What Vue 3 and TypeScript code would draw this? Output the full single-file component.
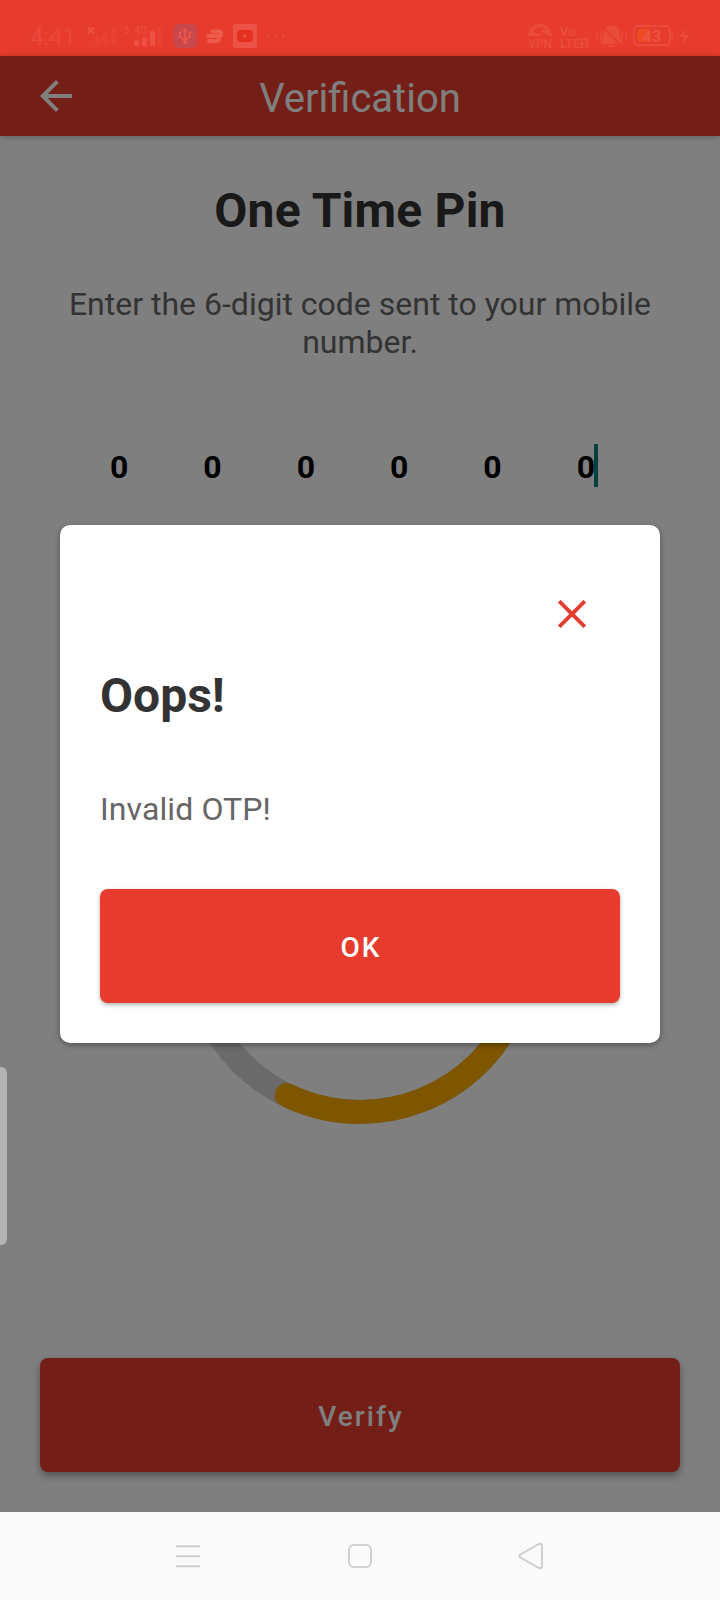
<script setup lang="ts">
import { ref } from 'vue'

const digits = ref<string[]>(['0', '0', '0', '0', '0', '0'])
const dialogOpen = ref(true)

const radius = 168
const circumference = 2 * Math.PI * radius
const progress = 205.8 / 360
const dash = `${circumference * progress} ${circumference}`

function closeDialog(): void {
  dialogOpen.value = false
}
</script>

<template>
  <div class="screen">
    <div class="status">
      <svg class="status-left" width="270" height="28" viewBox="20 22 270 28">
        <g fill="#ea493b">
          <text x="30" y="45" font-size="24.5" textLength="46">4:41</text>
          <path d="M88 27.500l6 6M94 27.500l-6 6" stroke="#eb5143" stroke-width="2.400" />
          <g opacity=".4">
            <rect x="88" y="41" width="4" height="4" rx="1" />
            <rect x="95" y="37" width="5" height="8" rx="1" />
            <rect x="103" y="32" width="5" height="13" rx="1" />
            <rect x="111" y="27" width="5" height="18" rx="1" />
          </g>
          <path d="M124 29.500l3-3.500 3 3.500zM124 31.500l3 3.500 3-3.500z" />
          <text x="134" y="34" font-size="10.500" font-weight="700">4G</text>
          <g fill="#ec5143">
            <rect x="134" y="40" width="5" height="6" rx="1.500" />
            <rect x="142" y="37" width="5" height="9" rx="1.500" />
            <rect x="150" y="31" width="5" height="15" rx="1.500" />
          </g>
          <rect x="158" y="27" width="4" height="19" rx="1" opacity=".4" />
        </g>
        <rect x="173.500" y="24" width="23.500" height="24" rx="5" fill="#c8484d" />
        <g fill="none" stroke="#ee5847" stroke-width="1.500">
          <path d="M185 30v13M180 33v4l5 3 5-3v-4" />
        </g>
        <g fill="#ee5847">
          <path d="M182.500 31.500l2.500-4 2.500 4z" />
          <circle cx="185" cy="42" r="2" />
          <circle cx="180" cy="33" r="1.400" />
          <rect x="188.700" y="31.700" width="2.600" height="2.600" />
        </g>
        <g fill="none" stroke="#ee5b4c" stroke-width="4" stroke-linecap="round" stroke-linejoin="round">
          <path d="M212.500 31.500h8M208.500 36h11q1.500-.3 1.500-3M209 41h8.500q1.500 0 1.500-3" />
        </g>
        <rect x="233" y="24" width="24" height="24" rx="2" fill="#ec5245" />
        <rect x="237" y="30" width="16" height="12" rx="3.500" fill="#e4301f" />
        <path d="M243.500 33.500v5l4-2.500z" fill="#ec5245" />
        <g fill="#ea493b">
          <circle cx="268" cy="36" r="1.400" />
          <circle cx="275.500" cy="36" r="1.400" />
          <circle cx="283" cy="36" r="1.400" />
        </g>
      </svg>
      <svg class="status-right" width="166" height="28" viewBox="526 22 166 28">
        <g fill="#ea4b3b">
          <path d="M528 36a12 12 0 0 1 24 0h-4l-7-5-1 5z" />
          <path d="M533 31q7-7 14-1l-5 0-3 4z" fill="#e73c2d" />
          <text x="528" y="48" font-size="13" font-weight="700" textLength="24" lengthAdjust="spacingAndGlyphs">VPN</text>
          <text x="560" y="35.500" font-size="13" font-weight="700" textLength="16">Vo</text>
          <text x="560" y="48" font-size="13" font-weight="700" textLength="20" lengthAdjust="spacingAndGlyphs">LTE</text>
          <rect x="580.500" y="38" width="8" height="10" rx="1.500" />
          <text x="582" y="46.500" font-size="9" font-weight="700" fill="#e73c2d">2</text>
          <path d="M611.500 25q8 1 8.500 9 0 6 3 10h-23q3-4 3-10 .5-8 8.500-9zM608 45h7q-3.500 4-7 0z" />
          <path d="M602 27l19 18" stroke="#e73c2d" stroke-width="2" />
          <path d="M597 33v6M601 31v10M622 31v10M626 33v6" stroke="#ea4b3b" stroke-width="1.500" />
          <rect x="634" y="26" width="36" height="19" rx="4" fill="none" stroke="#ea4b3b" stroke-width="2" />
          <rect x="671" y="32" width="2" height="7" rx="1" />
          <rect x="637.500" y="29" width="13" height="13" rx="2" fill="#ee4b25" />
          <text x="642" y="41.500" font-size="16" font-weight="500" textLength="19" fill="#ec5545">43</text>
          <path d="M687 28l-8 9h5l-2 7 8-9h-5z" />
        </g>
      </svg>
    </div>

    <div class="app">
      <header class="bar">
        <svg class="back" width="48" height="48" viewBox="0 0 24 24" fill="#fff">
          <path d="M20 11H7.830l5.590-5.590L12 4l-8 8 8 8 1.410-1.410L7.830 13H20v-2z" />
        </svg>
        <div class="bar-title">Verification</div>
      </header>

      <main class="body">
        <h1 class="heading">One Time Pin</h1>
        <p class="hint">Enter the 6-digit code sent to your mobile number.</p>
        <div class="code">
          <span v-for="(d, i) in digits" :key="i" class="digit" :class="{ active: i === digits.length - 1 }">{{ d }}</span>
        </div>
        <svg class="timer" width="360" height="360" viewBox="0 0 360 360" fill="none" stroke-width="24">
          <circle cx="180" cy="180" :r="radius" stroke="#d4d4d4" />
          <circle
            cx="180"
            cy="180"
            :r="radius"
            stroke="#ffad00"
            stroke-linecap="round"
            :stroke-dasharray="dash"
            transform="rotate(-90 180 180)"
          />
        </svg>
        <button class="btn verify" type="button">Verify</button>
      </main>

      <div v-if="dialogOpen" class="scrim">
        <section class="dialog" role="dialog">
          <svg class="close" width="28" height="28" viewBox="0 0 28 28" @click="closeDialog">
            <path d="M1.200 1.200l25.600 25.600M26.800 1.200l-25.600 25.600" stroke="#e73c2d" stroke-width="3.800" />
          </svg>
          <h2 class="dialog-title">Oops!</h2>
          <p class="dialog-text">Invalid OTP!</p>
          <button class="btn ok" type="button" @click="closeDialog">OK</button>
        </section>
      </div>
      <div class="edge-handle"></div>
    </div>

    <nav class="nav">
      <svg width="28" height="28" viewBox="0 0 28 28" stroke="#d0d0d0" stroke-width="2">
        <path d="M2 4.300h24M2 14.300h24M2 24.300h24" />
      </svg>
      <svg width="28" height="28" viewBox="0 0 28 28" fill="none" stroke="#d0d0d0" stroke-width="2">
        <rect x="3" y="3" width="22" height="22" rx="5" />
      </svg>
      <svg width="28" height="28" viewBox="0 0 28 28" fill="none" stroke="#d0d0d0" stroke-width="2">
        <path d="M2.200 12.600L20.500 2.200Q23.800 1 24 4V24Q23.800 27 20.500 25.800L2.200 15.400Q.5 14 2.200 12.600Z" />
      </svg>
    </nav>
  </div>
</template>

<style>
body {
  margin: 0;
}
</style>

<style scoped>
.screen {
  width: 720px;
  height: 1600px;
  display: flex;
  flex-direction: column;
  overflow: hidden;
  font-family: Roboto, 'Liberation Sans', sans-serif;
}
.status {
  height: 56px;
  box-sizing: border-box;
  padding: 22px 28px 0 20px;
  display: flex;
  justify-content: space-between;
  background: #e73c2d;
}
.app {
  position: relative;
  height: 1456px;
  display: flex;
  flex-direction: column;
  background: #fff;
}
.bar {
  height: 80px;
  display: grid;
  grid-template-columns: 1fr auto 1fr;
  align-items: center;
  background: #e73c2d;
  box-shadow: 0 1px 6px rgba(0, 0, 0, 0.25);
}
.back {
  margin-left: 32px;
}
.bar-title {
  font-size: 40px;
  line-height: 48px;
  color: #fff;
  padding-top: 6px;
}
.body {
  flex: 1;
  display: flex;
  flex-direction: column;
  align-items: center;
  padding: 47px 40px 40px;
}
.heading {
  margin: 0;
  font-size: 48px;
  line-height: 56px;
  font-weight: 700;
  letter-spacing: 0.2px;
  color: #333;
}
.hint {
  margin: 46px 0 0;
  font-size: 32px;
  line-height: 38px;
  text-align: center;
  color: #666;
}
.code {
  width: 560px;
  margin-top: 83px;
  display: grid;
  grid-template-columns: repeat(6, 1fr);
  font-size: 32px;
  line-height: 47px;
  height: 43px;
  font-weight: 700;
}
.digit {
  height: 43px;
  display: flex;
  justify-content: center;
  padding-right: 15px;
}
.digit.active::after {
  content: '';
  width: 4px;
  margin-left: -1px;
  margin-right: -3px;
  background: #008577;
}
.timer {
  margin-top: 277px;
}
.btn {
  border: 0;
  height: 114px;
  border-radius: 8px;
  padding: 2px 0 0 2px;
  background: #e73c2d;
  color: #fff;
  font-family: inherit;
  font-size: 28px;
  font-weight: 500;
  letter-spacing: 2.1px;
}
.verify {
  align-self: stretch;
  margin-top: auto;
  box-shadow: 0 4px 8px rgba(0, 0, 0, 0.35);
}
.scrim {
  position: absolute;
  inset: 0;
  display: flex;
  flex-direction: column;
  align-items: center;
  background: rgba(0, 0, 0, 0.5);
}
.dialog {
  width: 600px;
  height: 518px;
  margin-top: 469px;
  box-sizing: border-box;
  padding: 75px 40px 40px;
  display: flex;
  flex-direction: column;
  border-radius: 10px;
  background: #fff;
  box-shadow: 0 2px 6px rgba(0, 0, 0, 0.35);
}
.close {
  align-self: flex-end;
  margin-right: 34px;
}
.dialog-title {
  margin: 40px 0 0;
  font-size: 48px;
  line-height: 56px;
  font-weight: 700;
  color: #333;
}
.dialog-text {
  margin: 66px 0 0;
  font-size: 32px;
  line-height: 38px;
  letter-spacing: 0.1px;
  color: #666;
}
.ok {
  margin-top: auto;
  box-shadow: 0 2px 4px rgba(0, 0, 0, 0.3);
}
.edge-handle {
  position: absolute;
  left: 0;
  top: 1011px;
  width: 7px;
  height: 178px;
  border-radius: 0 6px 6px 0;
  background: #b3b3b3;
}
.nav {
  flex: 1;
  display: flex;
  justify-content: center;
  align-items: center;
  gap: 144px;
  background: #fafafa;
}
</style>
